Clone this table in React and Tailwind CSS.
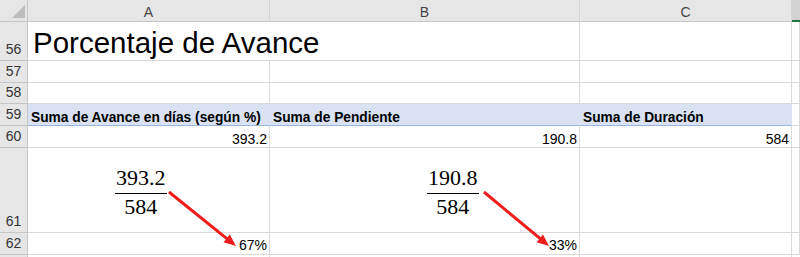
import React from "react";

const grid = "border-r border-b border-[#dadada]";

const RowHead = ({ n }) => (
  <div className="flex justify-center items-end pb-[4px] bg-[#e6e6e6] border-r border-b border-[#c6c6c6] text-[#333] text-[14px] leading-none">
    {n}
  </div>
);

const Cell = ({ children, className = "" }) => (
  <div className={`${grid} bg-white leading-none whitespace-nowrap ${className}`}>
    {children}
  </div>
);

const Fraction = ({ top, bottom }) => (
  <div className="inline-flex flex-col items-center font-['Liberation_Serif',serif] text-[22px] leading-none text-black">
    <span className="pb-[4px] border-b border-black px-[1px]">{top}</span>
    <span className="pt-[2px]">{bottom}</span>
  </div>
);

const Arrow = ({ x1, y1, x2, y2 }) => {
  const dx = x2 - x1;
  const dy = y2 - y1;
  const len = Math.sqrt(dx * dx + dy * dy);
  const ux = dx / len;
  const uy = dy / len;
  const hl = 12;
  const hw = 5;
  const bx = x2 - ux * hl;
  const by = y2 - uy * hl;
  const pts = `${x2},${y2} ${bx - uy * hw},${by + ux * hw} ${bx + uy * hw},${by - ux * hw}`;
  return (
    <g>
      <line x1={x1} y1={y1} x2={bx + ux} y2={by + uy} stroke="#ee1c1c" strokeWidth="3" />
      <polygon points={pts} fill="#ee1c1c" />
    </g>
  );
};

export default function App() {
  return (
    <div className="relative w-[800px] h-[257px] overflow-hidden bg-white font-['Liberation_Sans',Arial,sans-serif]">
      <div className="grid grid-cols-[28px_242px_310px_212px_8px] grid-rows-[22px_39px_22px_21px_22px_22px_85px_22px_2px]">
        {/* column headers */}
        <div className="relative bg-[#e6e6e6] border-r border-b border-[#c6c6c6]">
          <svg className="absolute left-0 top-0" width="27" height="21">
            <polygon points="12,18 25,18 25,5" fill="#bdbdbd" />
          </svg>
        </div>
        {["A", "B", "C"].map((c) => (
          <div
            key={c}
            className="flex justify-center items-start pt-[5px] bg-[#e6e6e6] border-r border-b border-r-[#d4d4d4] border-b-[#c6c6c6] text-[#444] text-[14px] leading-none"
          >
            {c}
          </div>
        ))}
        <div className="bg-[#d3d3d3] border-b-2 border-[#217346]" />

        {/* 56 */}
        <RowHead n="56" />
        <Cell className="col-span-2 pl-[5px] pt-[6px] text-[29.5px] text-black">
          Porcentaje de Avance
        </Cell>
        <Cell />
        <Cell />

        {/* 57 */}
        <RowHead n="57" />
        <Cell />
        <Cell />
        <Cell />
        <Cell />

        {/* 58 */}
        <RowHead n="58" />
        <Cell />
        <Cell />
        <Cell />
        <Cell />

        {/* 59 */}
        <RowHead n="59" />
        {["Suma de Avance en días (según %)", "Suma de Pendiente", "Suma de Duración"].map((t) => (
          <div
            key={t}
            className="bg-[#d9e1f2] border-r border-b border-r-[#d9e1f2] border-b-[#9bb5e0] pl-[3px] pt-[7px] font-bold text-[13.75px] leading-none text-black whitespace-nowrap"
          >
            {t}
          </div>
        ))}
        <Cell />

        {/* 60 */}
        <RowHead n="60" />
        <Cell className="text-right pr-[2px] pt-[6px] text-[14px] text-black">393.2</Cell>
        <Cell className="text-right pr-[2px] pt-[6px] text-[14px] text-black">190.8</Cell>
        <Cell className="text-right pr-[2px] pt-[6px] text-[14px] text-black">584</Cell>
        <Cell />

        {/* 61 */}
        <RowHead n="61" />
        <Cell className="pl-[87px] pt-[19px]">
          <Fraction top="393.2" bottom="584" />
        </Cell>
        <Cell className="pl-[157px] pt-[19px]">
          <Fraction top="190.8" bottom="584" />
        </Cell>
        <Cell />
        <Cell />

        {/* 62 */}
        <RowHead n="62" />
        <Cell className="text-right pr-[2px] pt-[5px] text-[14px] text-black">67%</Cell>
        <Cell className="text-right pr-[2px] pt-[5px] text-[14px] text-black">33%</Cell>
        <Cell />
        <Cell />

        {/* 63 */}
        <div className="bg-[#e6e6e6] border-r border-[#c6c6c6]" />
        <div className="border-r border-[#dadada]" />
        <div className="border-r border-[#dadada]" />
        <div className="border-r border-[#dadada]" />
        <div />
      </div>

      <svg className="absolute left-0 top-0 pointer-events-none" width="800" height="257">
        <Arrow x1={169} y1={192} x2={236} y2={246} />
        <Arrow x1={484} y1={192} x2={549} y2={246} />
      </svg>
    </div>
  );
}
